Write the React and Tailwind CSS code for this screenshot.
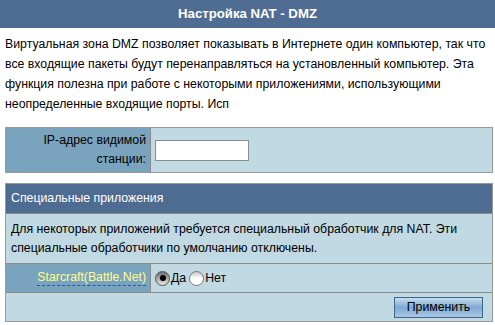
export default function App() {
  const f = { fontFamily: '"Liberation Sans", Arial, sans-serif' };
  return (
    <div className="w-[495px] h-[325px] bg-white overflow-hidden text-[12.3px] text-black" style={f}>
      <div className="h-[28px] bg-[#4f6d93] flex items-center justify-center text-white font-bold text-[13.2px]">
        Настройка NAT - DMZ
      </div>
      <div className="px-[5px] pt-[6px] leading-[20px]">
        Виртуальная зона DMZ позволяет показывать в Интернете один компьютер, так что все входящие пакеты будут перенаправляться на установленный компьютер. Эта функция полезна при работе с некоторыми приложениями, использующими неопределенные входящие порты. Исп
      </div>
      <div className="mx-[5px] mt-[13px] w-[488px] border border-[#999] flex h-[46px] bg-[#c0d9e2]">
        <div className="w-[145px] bg-[#7aa3bd] border-r border-[#8a8a8a] text-right pr-[4px] leading-[19px] flex flex-col justify-center">
          <span>IP-адрес видимой</span>
          <span>станции:</span>
        </div>
        <div className="flex items-center pl-[4px]">
          <input className="w-[94px] h-[21px] bg-white border border-[#8c8c8c] outline-none" />
        </div>
      </div>
      <div className="mx-[5px] mt-[10px] w-[488px] border border-[#999] bg-[#c0d9e2]">
        <div className="h-[30px] bg-[#4e6b92] text-white flex items-center pl-[5px] border-b border-[#8a8a8a]">
          Специальные приложения
        </div>
        <div className="px-[5px] pt-[1px] pb-[1px] leading-[19px] h-[50px] flex flex-col justify-center border-b border-[#8a8a8a]">
          <span>Для некоторых приложений требуется специальный обработчик для NAT. Эти</span>
          <span>специальные обработчики по умолчанию отключены.</span>
        </div>
        <div className="flex h-[29px] border-b border-[#8a8a8a]">
          <div className="w-[145px] bg-[#7aa3bd] border-r border-[#8a8a8a] flex items-center justify-end pr-[4px]">
            <span className="text-[#ffff88] border-b border-dashed border-[#1f5aa8] leading-[15px]">Starcraft(Battle.Net)</span>
          </div>
          <div className="flex items-center pl-[4px]">
            <span className="w-[15px] h-[15px] rounded-full border border-[#555] bg-gradient-to-b from-[#6e6e6e] to-[#e8e8e8] flex items-center justify-center">
              <span className="w-[6px] h-[6px] rounded-full bg-black"></span>
            </span>
            <span className="ml-[1px]">Да</span>
            <span className="ml-[3px] w-[15px] h-[15px] rounded-full border border-[#777] bg-gradient-to-b from-[#c8c8c8] via-white to-white"></span>
            <span className="ml-[1px]">Нет</span>
          </div>
        </div>
        <div className="h-[28px] flex items-center justify-end pr-[9px]">
          <button className="w-[89px] h-[21px] border border-[#3d6590] bg-gradient-to-b from-[#c9def0] via-[#7fa9d1] to-[#a9c8e4] text-[12.3px] leading-[18px]" style={f}>
            Применить
          </button>
        </div>
      </div>
    </div>
  );
}
